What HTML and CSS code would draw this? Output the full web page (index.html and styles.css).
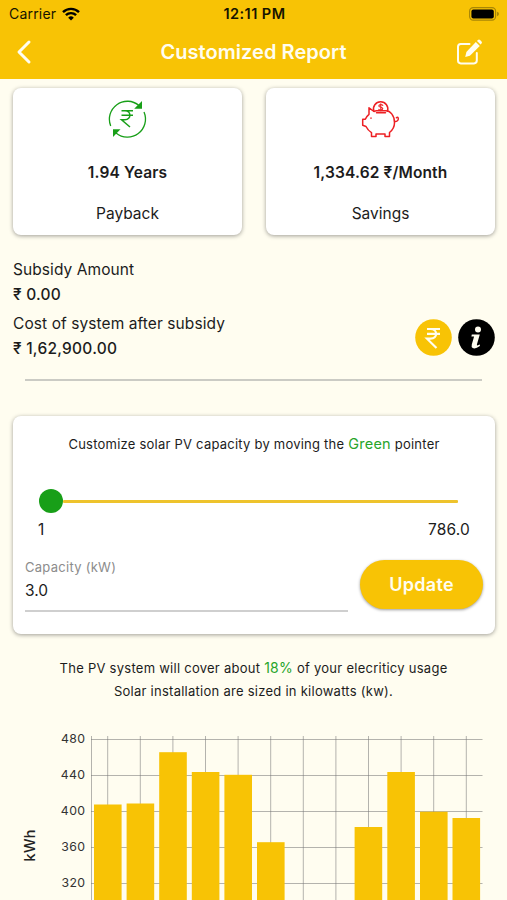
FILE: index.html
```
<!DOCTYPE html>
<html lang="en">
<head>
  <meta charset="UTF-8">
  <meta name="viewport" content="width=device-width, initial-scale=1">
  <title>Customized Report</title>
  <link rel="stylesheet" href="styles.css">
</head>
<body>
  <header class="header">
    <div class="status-bar">
      <div class="carrier">
        <span>Carrier</span>
        <svg width="18" height="14" viewBox="0 0 18 14" fill="none" stroke="#000" stroke-width="2.4">
          <path d="M1 5.2a11.3 11.3 0 0 1 16 0"/>
          <path d="M3.9 8.2a7.2 7.2 0 0 1 10.2 0"/>
          <path d="M9 13.6L6.2 10.7a4 4 0 0 1 5.6 0z" fill="#000" stroke="none"/>
        </svg>
      </div>
      <div class="time">12:11 PM</div>
      <svg class="battery" width="31" height="14" viewBox="0 0 31 14">
        <rect x=".6" y=".6" width="26" height="12.6" rx="3.6" fill="none" stroke="#a98706" stroke-width="1.2"/>
        <rect x="2.4" y="2.4" width="22.4" height="9" rx="2" fill="#000"/>
        <path d="M28 4.8v4.4q2-.6 2-2.2t-2-2.2z" fill="#a98706"/>
      </svg>
    </div>
    <nav class="nav">
      <svg width="16" height="26" viewBox="0 0 16 26" fill="none" stroke="#fffdf0" stroke-width="3" stroke-linecap="round" stroke-linejoin="round">
        <path d="M13 3L3 13l10 10"/>
      </svg>
      <h1>Customized Report</h1>
      <svg class="edit" width="27" height="27" viewBox="0 0 27 27">
        <path d="M13.5 5H4.8Q2 5 2 7.8V21.6q0 2.8 2.8 2.8H18q2.8 0 2.8-2.8V14" fill="none" stroke="#fffdf0" stroke-width="2" stroke-linecap="round"/>
        <path d="M19.800 3l4 4L13.900 16.700l-4.700 1.300 1.200-5z" fill="#fffdf0"/>
        <path d="M21 1.900l.9-.9q1.100-.9 2.200 0l1.400 1.400q1 1.100 0 2.200l-.9.900z" fill="#fffdf0"/>
      </svg>
    </nav>
  </header>

  <main>
    <div class="cards">
      <div class="card">
        <svg width="40" height="40" viewBox="0 0 40 40" fill="none" stroke="#189f18" stroke-width="1.3">
          <path d="M2.700 26A18 18 0 0 1 31 5.500"/>
          <path d="M36 12A18 18 0 0 1 8 33"/>
          <path d="M34 1v7.800h-7.800z" fill="#189f18" stroke="none"/>
          <path d="M5 37v-7.800h7.500z" fill="#189f18" stroke="none"/>
          <path d="M13.500 10.700h11.500M13.500 15.200h11.500M13.500 10.700h3.500c6.500 0 6.500 9 0 9H13.500l8.500 7.300" stroke-width="1.5"/>
        </svg>
        <strong>1.94 Years</strong>
        <span>Payback</span>
      </div>
      <div class="card">
        <svg width="40" height="40" viewBox="0 0 40 40" fill="none" stroke="#ed2024" stroke-width="1.5" stroke-linejoin="round" stroke-linecap="round">
          <path d="M13 11.500L8 7.800v6.500q-2.700 2.200-3.700 5H1.700v6l3.300 1.200q2 4 5.500 6.200v3.800h4.500v-2.600h9v2.600H28.500v-4q5-4 5-9.800C33.500 15 29 10.800 25 10.800h-9.500q-1.300.1-2.500.7z"/>
          <path d="M12.800 11.200a7.200 7.200 0 1 1 13.700 0M15.500 12.800h9"/>
          <path d="M33.700 21.500c5 .5 4-6 1.700-3.800M10 18v.2"/>
          <path d="M21.800 5.300c-1.200-1.200-4-.9-4 .7s4 1 4 2.600-2.800 2-4 .7M19.800 3.700v7" stroke-width="1.1"/>
        </svg>
        <strong>1,334.62 ₹/Month</strong>
        <span>Savings</span>
      </div>
    </div>

    <section class="summary">
      <div class="costs">
        <p>Subsidy Amount</p>
        <p class="amount">₹ 0.00</p>
        <p class="cost-label">Cost of system after subsidy</p>
        <p class="amount">₹ 1,62,900.00</p>
      </div>
      <div class="round-buttons">
        <svg width="37" height="37" viewBox="0 0 37 37">
          <circle cx="18.5" cy="18.5" r="18.3" fill="#f8c305"/>
          <path d="M12 10h13M12 14.900h13M12 10h3.500c7.500 0 7.500 9.700 0 9.700H12l9.500 9.300" fill="none" stroke="#fffdf0" stroke-width="2.2"/>
        </svg>
        <svg width="37" height="37" viewBox="0 0 37 37">
          <circle cx="18.5" cy="18.5" r="18.3" fill="#000"/>
          <circle cx="20" cy="10.400" r="3" fill="#fffdf0"/>
          <path d="M13.800 15.600h8l-2.900 9.900q-.4 1.700 3 .1v1.500q-4.700 3.300-7.200 1.900-1.600-1-.9-3.600l2.300-7.800h-2.700z" fill="#fffdf0"/>
        </svg>
      </div>
    </section>
    <hr class="divider">

    <section class="panel">
      <p class="panel-title">Customize solar PV capacity by moving the <em>Green</em> pointer</p>
      <div class="slider">
        <span class="thumb"></span>
        <span class="track"></span>
      </div>
      <div class="range">
        <span>1</span>
        <span>786.0</span>
      </div>
      <div class="capacity">
        <div class="field">
          <label>Capacity (kW)</label>
          <div class="value">3.0</div>
        </div>
        <button class="update">Update</button>
      </div>
    </section>

    <p class="coverage">The PV system will cover about <em>18%</em> of your elecriticy usage<br>Solar installation are sized in kilowatts (kw).</p>

    <svg class="chart" width="507" height="180" viewBox="0 0 507 180">
      <path class="grid" d="M91 19.500H482.500M91 55.500H482.500M91 91.500H482.500M91 127.500H482.500M91 163.500H482.500"/>
      <path class="grid" d="M91.500 16V180M107.700 16V180M140.300 16V180M172.900 16V180M205.500 16V180M238.100 16V180M270.700 16V180M303.300 16V180M335.900 16V180M368.500 16V180M401.100 16V180M433.700 16V180M466.300 16V180"/>
      <g class="bars">
        <rect x="94" y="84.500" width="27.600" height="96"/>
        <rect x="126.600" y="83.500" width="27.600" height="97"/>
        <rect x="159.200" y="32.200" width="27.600" height="148"/>
        <rect x="191.800" y="52" width="27.600" height="128"/>
        <rect x="224.400" y="54.800" width="27.600" height="126"/>
        <rect x="257" y="122.200" width="27.600" height="58"/>
        <rect x="354.600" y="107" width="27.600" height="73"/>
        <rect x="387.300" y="52" width="27.600" height="128"/>
        <rect x="420" y="91.700" width="27.600" height="89"/>
        <rect x="452.500" y="98" width="27.600" height="82"/>
      </g>
      <g class="ticks">
        <text x="85.500" y="23.300">480</text>
        <text x="85.500" y="59.300">440</text>
        <text x="85.500" y="95.300">400</text>
        <text x="85.500" y="131.300">360</text>
        <text x="85.500" y="167.300">320</text>
      </g>
      <text class="axis-name" transform="translate(35 141.500) rotate(-90)">kWh</text>
    </svg>
  </main>
</body>
</html>
```
FILE: styles.css
```
* { box-sizing: border-box; }
body {
  margin: 0;
  height: 900px;
  overflow: hidden;
  background: #fffdf0;
  color: #1c1c1c;
  font-family: Inter, "Liberation Sans", sans-serif;
  font-size: 15.5px;
}
p, h1 { margin: 0; }
svg { display: block; flex: none; }
em { color: #27a52b; font-style: normal; }

/* header */
.header { height: 79px; background: #f8c305; }
.status-bar {
  display: grid;
  grid-template-columns: 1fr auto 1fr;
  align-items: center;
  height: 27px;
  padding: 0 7px 0 9px;
  color: #151300;
}
.carrier { display: flex; align-items: center; gap: 6px; font-size: 14px; letter-spacing: .2px; }
.time { font-size: 14.5px; font-weight: 600; letter-spacing: .45px; }
.battery { justify-self: end; }
.nav {
  display: grid;
  grid-template-columns: 1fr auto 1fr;
  align-items: center;
  height: 50px;
  padding: 0 16px;
}
.nav h1 { color: #fffdf0; font-size: 20px; font-weight: 600; letter-spacing: .05px; }
.edit { justify-self: end; margin-right: 8px; }

/* top cards */
.cards { display: flex; gap: 24px; padding: 9px 12px 0 13px; }
.card {
  flex: 1;
  display: flex;
  flex-direction: column;
  align-items: center;
  height: 147px;
  padding-top: 12px;
  background: #fff;
  border-radius: 8px;
  box-shadow: 0 1px 4px rgba(0,0,0,.38);
}
.card strong { margin-top: 22px; line-height: 22px; font-weight: 600; letter-spacing: .15px; }
.card span { margin-top: 19px; line-height: 22px; }

/* subsidy and cost */
.summary {
  display: flex;
  align-items: flex-end;
  justify-content: space-between;
  padding: 22px 12px 0 13px;
}
.costs p { line-height: 25px; letter-spacing: .08px; }
.costs .amount { font-weight: 500; letter-spacing: .25px; }
.costs .cost-label { margin-top: 4px; }
.round-buttons { display: flex; gap: 6px; margin-bottom: 5px; }
.divider { height: 2px; margin: 18px 25px 0; border: 0; background: #cbcbc4; }

/* capacity panel */
.panel {
  height: 218px;
  margin: 35px 12px 0 13px;
  padding-top: 17px;
  background: #fff;
  border-radius: 8px;
  box-shadow: 0 1px 4px rgba(0,0,0,.38);
}
.panel-title { font-size: 13px; line-height: 22px; letter-spacing: .23px; text-align: center; }
.panel-title em { font-size: 14.5px; }
.slider { display: flex; align-items: center; height: 24px; margin: 34px 37px 0 26px; }
.thumb { width: 24px; height: 24px; border-radius: 50%; background: #189f18; }
.track { flex: 1; height: 3px; background: #eec32c; border-radius: 1px; }
.range { display: flex; justify-content: space-between; margin: 6px 25px 0; line-height: 22px; letter-spacing: .2px; }
.capacity { display: flex; gap: 12px; margin: 19px 12px 0; }
.field { flex: 1; border-bottom: 2px solid #cfcfcf; height: 52px; }
.field label { display: block; font-size: 13px; line-height: 14px; letter-spacing: .27px; color: #8c8c8c; }
.value { margin-top: 7px; line-height: 20px; }
.update {
  width: 123px;
  height: 49px;
  border: 0;
  border-radius: 25px;
  background: #f8c305;
  box-shadow: 0 1px 3px rgba(0,0,0,.4);
  color: #fffdf0;
  font-family: inherit;
  font-size: 18px;
  font-weight: 600;
  letter-spacing: .3px;
}

.coverage { margin-top: 23px; font-size: 13px; line-height: 22.5px; letter-spacing: .26px; text-align: center; }
.coverage em { font-size: 14px; }

/* usage chart */
.chart { margin-top: 18px; }
.grid { stroke: #777; stroke-opacity: .55; fill: none; }
.bars { fill: #f8c305; }
.ticks { font-size: 12.3px; letter-spacing: .4px; text-anchor: end; fill: #333; }
.axis-name { font-size: 14.5px; font-weight: 500; letter-spacing: .3px; fill: #222; }
```
